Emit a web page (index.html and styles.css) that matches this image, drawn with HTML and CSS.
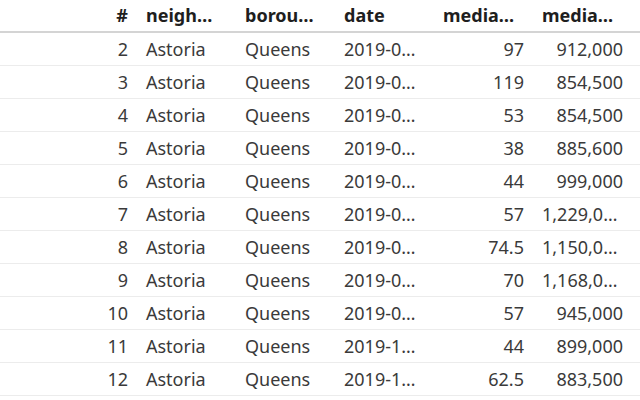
FILE: index.html
```html
<!DOCTYPE html>
<html>
<head>
<meta charset="utf-8">
<link rel="stylesheet" href="styles.css">
</head>
<body>
<div class="table">
  <div class="row head">
    <div class="cell num">#</div>
    <div class="cell">neighborhood</div>
    <div class="cell">borough</div>
    <div class="cell">date</div>
    <div class="cell">median_days_on_market</div>
    <div class="cell">median_sale_price</div>
  </div>
  <div class="row"><div class="cell num">2</div><div class="cell">Astoria</div><div class="cell">Queens</div><div class="cell">2019-01-01</div><div class="cell num">97</div><div class="cell num">912,000</div></div>
  <div class="row"><div class="cell num">3</div><div class="cell">Astoria</div><div class="cell">Queens</div><div class="cell">2019-02-01</div><div class="cell num">119</div><div class="cell num">854,500</div></div>
  <div class="row"><div class="cell num">4</div><div class="cell">Astoria</div><div class="cell">Queens</div><div class="cell">2019-03-01</div><div class="cell num">53</div><div class="cell num">854,500</div></div>
  <div class="row"><div class="cell num">5</div><div class="cell">Astoria</div><div class="cell">Queens</div><div class="cell">2019-04-01</div><div class="cell num">38</div><div class="cell num">885,600</div></div>
  <div class="row"><div class="cell num">6</div><div class="cell">Astoria</div><div class="cell">Queens</div><div class="cell">2019-05-01</div><div class="cell num">44</div><div class="cell num">999,000</div></div>
  <div class="row"><div class="cell num">7</div><div class="cell">Astoria</div><div class="cell">Queens</div><div class="cell">2019-06-01</div><div class="cell num">57</div><div class="cell num">1,229,000</div></div>
  <div class="row"><div class="cell num">8</div><div class="cell">Astoria</div><div class="cell">Queens</div><div class="cell">2019-07-01</div><div class="cell num">74.5</div><div class="cell num">1,150,000</div></div>
  <div class="row"><div class="cell num">9</div><div class="cell">Astoria</div><div class="cell">Queens</div><div class="cell">2019-08-01</div><div class="cell num">70</div><div class="cell num">1,168,000</div></div>
  <div class="row"><div class="cell num">10</div><div class="cell">Astoria</div><div class="cell">Queens</div><div class="cell">2019-09-01</div><div class="cell num">57</div><div class="cell num">945,000</div></div>
  <div class="row"><div class="cell num">11</div><div class="cell">Astoria</div><div class="cell">Queens</div><div class="cell">2019-10-01</div><div class="cell num">44</div><div class="cell num">899,000</div></div>
  <div class="row"><div class="cell num">12</div><div class="cell">Astoria</div><div class="cell">Queens</div><div class="cell">2019-11-01</div><div class="cell num">62.5</div><div class="cell num">883,500</div></div>
</div>
</body>
</html>
```
FILE: styles.css
```css
html, body {
  margin: 0;
  padding: 0;
  background: #fff;
}
body {
  font-family: "Noto Sans", sans-serif;
  font-size: 18px;
  color: #3a3a3a;
  overflow: hidden;
}
.table {
  width: 640px;
}
.row {
  display: grid;
  grid-template-columns: 138px repeat(5, 99px);
  height: 32px;
  border-bottom: 1px solid #ececec;
}
.row.head {
  height: 31px;
  border-bottom: 2px solid #d4d4d4;
  font-weight: 700;
  color: #1e1e1e;
}
.cell {
  padding: 0 10px 0 8px;
  line-height: 33px;
  white-space: nowrap;
  overflow: hidden;
  text-overflow: ellipsis;
}
.head .cell {
  line-height: 31px;
  padding-right: 15px;
}
.head .cell.num {
  padding-right: 10px;
}
.num {
  text-align: right;
}
```
